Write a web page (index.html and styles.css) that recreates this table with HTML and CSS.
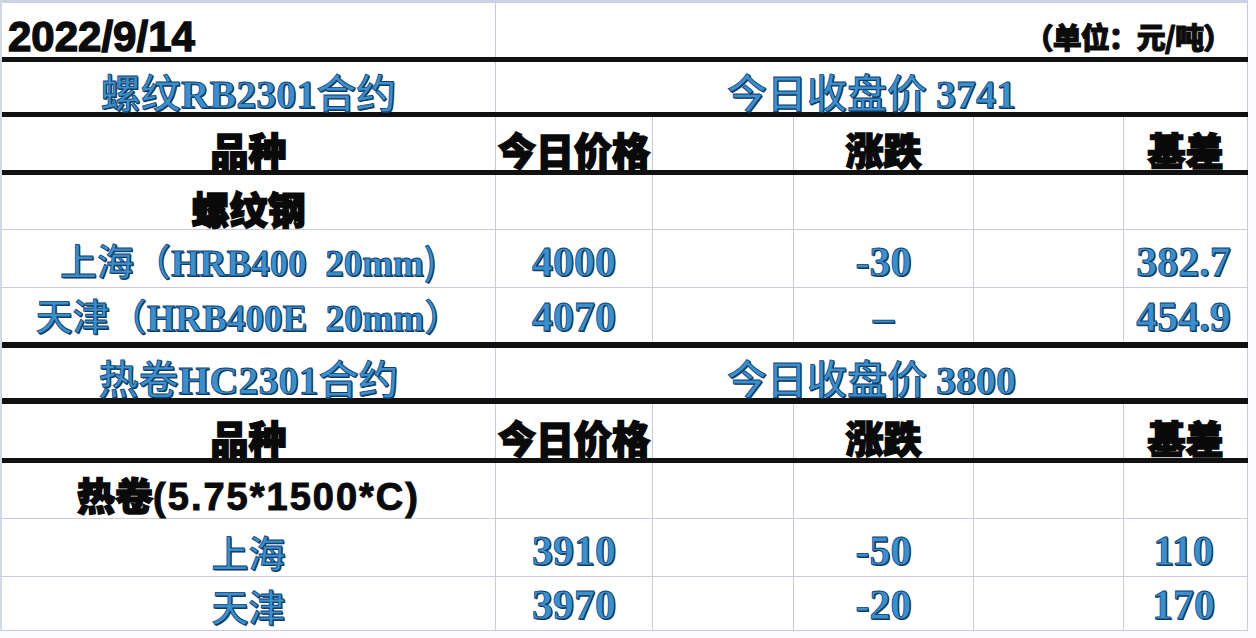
FILE: index.html
```html
<!DOCTYPE html>
<html lang="zh-CN">
<head>
<meta charset="utf-8">
<title>2022/9/14 螺纹钢 热卷 价格</title>
<link rel="stylesheet" href="styles.css">
</head>
<body>
<div class="sheet">
  <div class="row r-a thick">
    <div class="cell span-left left"><span class="date">2022/9/14</span></div>
    <div class="cell span-right right"><span class="unit">（单位：元/吨）</span></div>
  </div>
  <div class="row r-b thick">
    <div class="cell span-left"><span class="blue title">螺纹<span class="num">RB2301</span>合约</span></div>
    <div class="cell span-right"><span class="blue title">今日收盘价 <span class="num">3741</span></span></div>
  </div>
  <div class="row r-c thick">
    <div class="cell c1"><span class="head">品种</span></div>
    <div class="cell c2"><span class="head">今日价格</span></div>
    <div class="cell c3"></div>
    <div class="cell c4"><span class="head">涨跌</span></div>
    <div class="cell c5"></div>
    <div class="cell c6"><span class="head">基差</span></div>
  </div>
  <div class="row r-d thin">
    <div class="cell c1"><span class="head">螺纹钢</span></div>
    <div class="cell c2"></div>
    <div class="cell c3"></div>
    <div class="cell c4"></div>
    <div class="cell c5"></div>
    <div class="cell c6"></div>
  </div>
  <div class="row r-e thin">
    <div class="cell c1"><span class="blue item">上海（<span class="num">HRB400&nbsp; 20mm</span>)</span></div>
    <div class="cell c2"><span class="blue num val">4000</span></div>
    <div class="cell c3"></div>
    <div class="cell c4"><span class="blue num val">-30</span></div>
    <div class="cell c5"></div>
    <div class="cell c6"><span class="blue num val">382.7</span></div>
  </div>
  <div class="row r-f thick6">
    <div class="cell c1"><span class="blue item">天津（<span class="num">HRB400E&nbsp; 20mm</span>）</span></div>
    <div class="cell c2"><span class="blue num val">4070</span></div>
    <div class="cell c3"></div>
    <div class="cell c4"><span class="blue num val">–</span></div>
    <div class="cell c5"></div>
    <div class="cell c6"><span class="blue num val">454.9</span></div>
  </div>
  <div class="row r-g thick6">
    <div class="cell span-left"><span class="blue title">热卷<span class="num">HC2301</span>合约</span></div>
    <div class="cell span-right"><span class="blue title">今日收盘价 <span class="num">3800</span></span></div>
  </div>
  <div class="row r-h thick">
    <div class="cell c1"><span class="head">品种</span></div>
    <div class="cell c2"><span class="head">今日价格</span></div>
    <div class="cell c3"></div>
    <div class="cell c4"><span class="head">涨跌</span></div>
    <div class="cell c5"></div>
    <div class="cell c6"><span class="head">基差</span></div>
  </div>
  <div class="row r-i thin">
    <div class="cell c1"><span class="head">热卷<span class="spec">(5.75*1500*C)</span></span></div>
    <div class="cell c2"></div>
    <div class="cell c3"></div>
    <div class="cell c4"></div>
    <div class="cell c5"></div>
    <div class="cell c6"></div>
  </div>
  <div class="row r-j thin">
    <div class="cell c1"><span class="blue item">上海</span></div>
    <div class="cell c2"><span class="blue num val">3910</span></div>
    <div class="cell c3"></div>
    <div class="cell c4"><span class="blue num val">-50</span></div>
    <div class="cell c5"></div>
    <div class="cell c6"><span class="blue num val">110</span></div>
  </div>
  <div class="row r-k thin">
    <div class="cell c1"><span class="blue item">天津</span></div>
    <div class="cell c2"><span class="blue num val">3970</span></div>
    <div class="cell c3"></div>
    <div class="cell c4"><span class="blue num val">-20</span></div>
    <div class="cell c5"></div>
    <div class="cell c6"><span class="blue num val">170</span></div>
  </div>
</div>
</body>
</html>
```

FILE: styles.css
```css
html, body {
  margin: 0;
  padding: 0;
  background: #fbfbfd;
}

body {
  width: 1256px;
  height: 638px;
  overflow: hidden;
  font-family: "Noto Sans CJK SC", "Liberation Sans", sans-serif;
}

.sheet {
  width: 1248px;
  background: #ffffff;
  border-top: 3px solid #c9d3df;
  border-left: 2px solid #d3d8e6;
  box-sizing: border-box;
}

.row {
  display: grid;
  grid-template-columns: 494px 157px 141px 180px 150px 124px;
  box-sizing: border-box;
}

.row.thick { border-bottom: 5px solid #111111; }
.row.thick6 { border-bottom: 6px solid #111111; }
.row.thin { border-bottom: 1px solid #c7cbdd; }

.r-a { height: 59px; }
.r-b { height: 55px; }
.r-c { height: 58px; }
.r-d { height: 55px; }
.r-e { height: 58px; }
.r-f { height: 60px; }
.r-g { height: 56px; }
.r-h { height: 59px; }
.r-i { height: 56px; }
.r-j { height: 58px; }
.r-k { height: 54px; }

.cell {
  display: flex;
  align-items: flex-end;
  justify-content: center;
  border-right: 1px solid #c7cbdd;
  box-sizing: border-box;
  min-width: 0;
  overflow: visible;
  white-space: nowrap;
  line-height: 1;
}

.span-left { grid-column: 1 / 2; }
.span-right { grid-column: 2 / 7; }

.left { justify-content: flex-start; padding-left: 6px; }
.right { justify-content: flex-end; padding-right: 16px; }

.date {
  font-family: "Liberation Sans", sans-serif;
  font-weight: 700;
  font-size: 42px;
  color: #0c0c0c;
  -webkit-text-stroke: 1.4px #0c0c0c;
  margin-bottom: -1px;
}

.unit {
  font-family: "Noto Sans CJK SC", sans-serif;
  font-weight: 900;
  font-size: 29px;
  color: #0c0c0c;
  -webkit-text-stroke: 1px #0c0c0c;
  letter-spacing: -1px;
  margin-bottom: 6px;
}

.head {
  font-family: "Noto Sans CJK SC", sans-serif;
  font-weight: 900;
  font-size: 38px;
  color: #0a0a0a;
  -webkit-text-stroke: 1.6px #0a0a0a;
  margin-bottom: 2px;
}

.spec {
  font-family: "Liberation Sans", sans-serif;
  font-weight: 700;
  font-size: 38px;
  letter-spacing: 2px;
  -webkit-text-stroke: 1px #0a0a0a;
}

.blue {
  font-family: "Noto Sans CJK SC", sans-serif;
  font-weight: 500;
  color: #3b8fcd;
  -webkit-text-stroke: 0.8px #0f3f6e;
  text-shadow: 1px 1px 0 #0b3459;
}

.num {
  font-family: "Liberation Serif", serif;
  font-weight: 700;
}

.title {
  font-size: 40px;
  margin-bottom: -3px;
}

.item {
  font-size: 37px;
  margin-bottom: 5px;
}

.val {
  font-size: 42px;
  margin-bottom: 4px;
}

.c6 .val { margin-right: 4px; }
```
